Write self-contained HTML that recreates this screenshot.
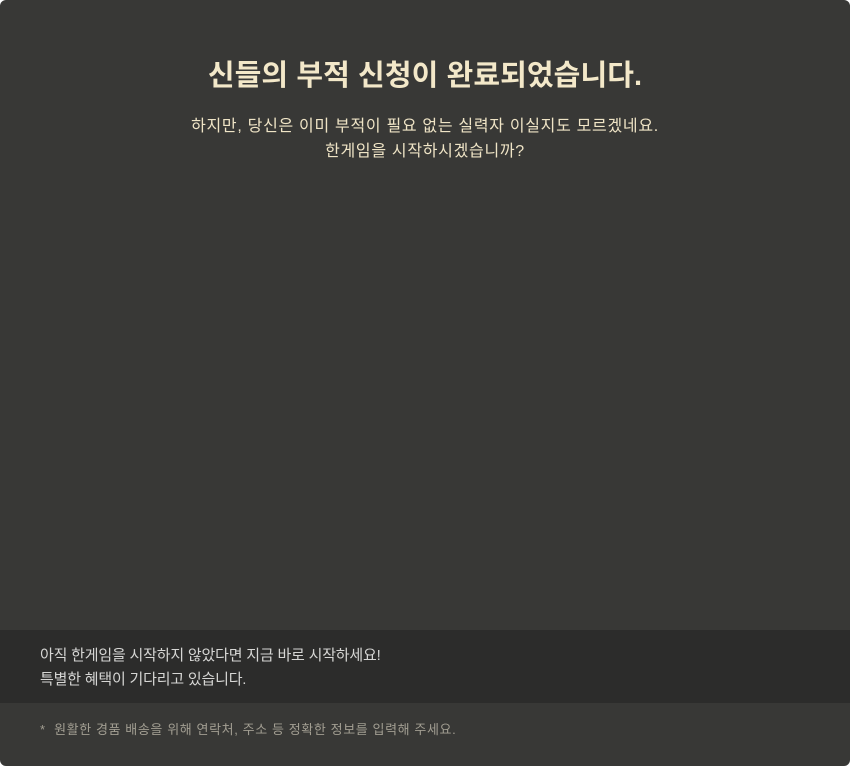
<!DOCTYPE html>
<html><head><meta charset="utf-8"><style>
html,body{margin:0;padding:0;background:#fff;}
.w{width:850px;height:766px;background:#383836;border-radius:6px;position:relative;overflow:hidden;font-family:"Liberation Sans","Noto Sans CJK KR",sans-serif;}
h1{position:absolute;top:57px;left:0;width:850px;margin:0;text-align:center;font-size:29px;font-weight:bold;color:#f3e8c9;letter-spacing:0.1px;line-height:38px;}
.s{position:absolute;top:114px;left:0;width:850px;text-align:center;font-size:16px;line-height:25px;color:#efe4c6;letter-spacing:0.7px;}
.b{position:absolute;top:630px;left:0;width:850px;height:73px;background:#2c2c2b;}
.b p{margin:0;position:absolute;left:40px;top:14px;font-size:15px;line-height:24px;color:#d6d6d4;letter-spacing:-0.2px;}
.f{position:absolute;left:40px;top:719px;font-size:13px;color:#a29e92;letter-spacing:0.6px;}
</style></head><body><div class="w">
<h1>신들의 부적 신청이 완료되었습니다.</h1>
<div class="s">하지만, 당신은 이미 부적이 필요 없는 실력자 이실지도 모르겠네요.<br>한게임을 시작하시겠습니까?</div>
<div class="b"><p>아직 한게임을 시작하지 않았다면 지금 바로 시작하세요!<br>특별한 혜택이 기다리고 있습니다.</p></div>
<div class="f">*&nbsp; 원활한 경품 배송을 위해 연락처, 주소 등 정확한 정보를 입력해 주세요.</div>
</div></body></html>
